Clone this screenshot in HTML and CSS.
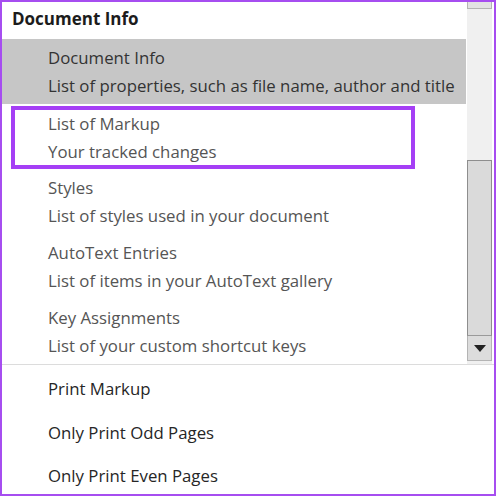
FILE: index.html
```html
<!DOCTYPE html>
<html>
<head>
<meta charset="utf-8">
<link rel="stylesheet" href="styles.css">
</head>
<body>
<div class="frame">
  <div class="top">
    <div class="list">
      <div class="heading">Document Info</div>
      <div class="item selected">
        <div class="line">Document Info</div>
        <div class="line">List of properties, such as file name, author and title</div>
      </div>
      <div class="item marked">
        <div class="line">List of Markup</div>
        <div class="line">Your tracked changes</div>
      </div>
      <div class="item">
        <div class="line">Styles</div>
        <div class="line">List of styles used in your document</div>
      </div>
      <div class="item">
        <div class="line">AutoText Entries</div>
        <div class="line">List of items in your AutoText gallery</div>
      </div>
      <div class="item">
        <div class="line">Key Assignments</div>
        <div class="line">List of your custom shortcut keys</div>
      </div>
    </div>
    <div class="scrollbar">
      <div class="btn-up"></div>
      <div class="track-upper"></div>
      <div class="thumb"></div>
      <div class="btn-down">
        <svg width="12" height="7" viewBox="0 0 12 7"><path d="M0 0 H12 L6 7 Z" fill="#222"/></svg>
      </div>
    </div>
  </div>
  <div class="bottom">
    <div class="opt">Print Markup</div>
    <div class="opt">Only Print Odd Pages</div>
    <div class="opt">Only Print Even Pages</div>
  </div>
</div>
</body>
</html>
```
FILE: styles.css
```css
html, body {
  margin: 0;
  padding: 0;
  background: #fff;
}
.frame {
  width: 496px;
  height: 496px;
  box-sizing: border-box;
  border: 2px solid #a64df0;
  overflow: hidden;
  font-family: "Open Sans", "Noto Sans", sans-serif;
  font-size: 16.8px;
  background: #fff;
}
.top {
  display: flex;
  height: 362px;
  border-bottom: 1px solid #dcdcdc;
}
.list {
  flex: 1;
  display: flex;
  flex-direction: column;
  overflow: hidden;
}
.heading {
  height: 37px;
  box-sizing: border-box;
  padding-bottom: 4px;
  flex: none;
  display: flex;
  align-items: center;
  padding-left: 10px;
  font-weight: 700;
  font-size: 17px;
  color: #1c1c1c;
}
.item {
  height: 65px;
  flex: none;
  box-sizing: border-box;
  display: flex;
  flex-direction: column;
  justify-content: center;
  padding-left: 46px;
  color: #555;
  line-height: 28px;
}
.item.selected {
  background: #c6c6c6;
  color: #333;
  margin-right: 1px;
}
.item.marked {
  margin: 2px 52px 0 9px;
  height: 63px;
  border: 4px solid #a53ff5;
  padding-left: 33px;
  padding-top: 0;
}
.scrollbar {
  width: 25px;
  margin-right: 2px;
  background: #f0f0f0;
  display: flex;
  flex-direction: column;
}
.btn-up {
  height: 6px;
  border: 1px solid #b4b4b4;
  border-top: none;
  background: #e3e3e3;
}
.track-upper {
  height: 151px;
}
.thumb {
  height: 176px;
  box-sizing: border-box;
  border: 1px solid #8e8e8e;
  border-bottom-color: #9a9a9a;
  background: #dadada;
}
.btn-down {
  height: 25px;
  box-sizing: border-box;
  border: 1px solid #b4b4b4;
  border-top: none;
  background: #dcdcdc;
  display: flex;
  align-items: center;
  justify-content: center;
}
.bottom {
  display: flex;
  flex-direction: column;
  padding-top: 2px;
}
.opt {
  height: 43.5px;
  flex: none;
  display: flex;
  align-items: center;
  padding-left: 46px;
  color: #262626;
}
```
